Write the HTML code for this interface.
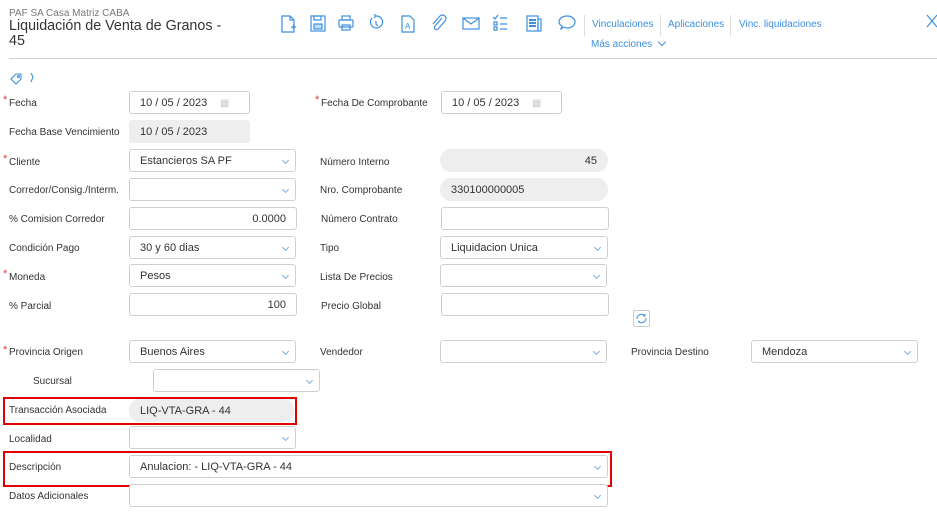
<!DOCTYPE html>
<html><head><meta charset="utf-8"><style>
*{box-sizing:border-box;margin:0;padding:0}
body{width:937px;height:519px;background:#fff;font-family:"Liberation Sans",sans-serif;position:relative;overflow:hidden;color:#333}
.a{position:absolute}
.l{position:absolute;font-size:10px;color:#333;line-height:12px;margin-top:1px}
.s{position:absolute;color:#e53935;font-size:11px;line-height:10px}
.b{position:absolute;height:23px;border:1px solid #cfcfcf;border-radius:3px;background:#fff;font-size:11px;line-height:21px;padding-left:10px;padding-top:1px;color:#333}
.g{background:#eeeeef;border-color:#eeeeef;border-radius:11px}
.r{text-align:right;padding-right:10px}
.dd::after{content:"";position:absolute;right:7px;top:8px;width:4px;height:4px;border-right:1px solid #7aaee0;border-bottom:1px solid #7aaee0;transform:rotate(45deg)}
.lnk{position:absolute;font-size:10px;color:#3d8fe0;top:19px}
.ic{position:absolute;top:14px}
</style></head><body>
<div class="a" style="left:9px;top:8px;font-size:10px;color:#777">PAF SA Casa Matriz CABA</div>
<div class="a" style="left:9px;top:19px;font-size:14.3px;color:#333;line-height:15px">Liquidación de Venta de Granos -<br>45</div>
<svg class="ic" style="left:280px" width="300" height="20" fill="none" stroke="#3d8fe0" stroke-width="1.2">
<path d="M2 2h8l4 4v12H2z M10 2v4h4 M11 13h5 M13.5 10.5v5"/>
<g transform="translate(30,0)"><rect x="1" y="2" width="14" height="15"/><rect x="4" y="2" width="7" height="4"/><rect x="4" y="10" width="8" height="5" fill="#3d8fe0" fill-opacity=".3"/></g>
<g transform="translate(58,0)"><rect x="4" y="2" width="8" height="4"/><rect x="1" y="6" width="14" height="7" rx="1"/><rect x="4" y="11" width="8" height="5"/></g>
<g transform="translate(88,0)"><path d="M4 4a6 6 0 1 0 4-2 M8 2l-2-2 M8 2l-2 2 M8 7v3l2 2"/></g>
<g transform="translate(120,0)"><path d="M2 2h8l4 4v12H2z"/><text x="5" y="15" font-size="8" fill="#3d8fe0" stroke="none" font-family="Liberation Sans">A</text></g>
<g transform="translate(150,0)"><path d="M12 4l-7 8a2 2 0 0 0 3 3l7-8a3.5 3.5 0 0 0-5-5l-7 8"/></g>
<g transform="translate(182,0)"><rect x="1" y="4" width="16" height="11"/><path d="M1 4l8 6 8-6"/></g>
<g transform="translate(212,0)"><path d="M1 3l2 2 3-4 M2 8h3v3H2z M2 13h3v3H2z M8 4h7 M8 10h7 M8 15h7"/></g>
<g transform="translate(246,0)"><rect x="1" y="2" width="11" height="15"/><rect x="12" y="5" width="3" height="12"/><path d="M3 6h7 M3 9h7 M3 12h7" stroke-width="2"/></g>
<g transform="translate(278,0)"><path d="M9 2c5 0 8 3 8 6s-3 6-8 6c-1 0-2 0-3-1l-3 2 1-3c-2-1-3-2-3-4 0-3 3-6 8-6z"/></g>
</svg>
<div class="a" style="left:584px;top:15px;width:1px;height:21px;background:#ddd"></div>
<div class="a" style="left:660px;top:15px;width:1px;height:21px;background:#ddd"></div>
<div class="a" style="left:730px;top:15px;width:1px;height:21px;background:#ddd"></div>
<div class="lnk" style="left:592px">Vinculaciones</div>
<div class="lnk" style="left:668px">Aplicaciones</div>
<div class="lnk" style="left:739px">Vinc. liquidaciones</div>
<div class="lnk" style="left:591px;top:39px">Más acciones <span style="display:inline-block;width:6px;height:6px;border-right:1px solid #3d8fe0;border-bottom:1px solid #3d8fe0;transform:rotate(45deg);margin-left:4px;position:relative;top:-2px"></span></div>
<svg class="a" style="left:926px;top:14px" width="11" height="14" stroke="#3d8fe0" stroke-width="1.2"><path d="M1 1l10 12 M11 1L1 13"/></svg>
<div class="a" style="left:9px;top:58px;width:928px;height:1px;background:#d0d0d0"></div>
<svg class="a" style="left:9px;top:71px" width="30" height="14" fill="none" stroke="#3d8fe0" stroke-width="1.1"><path d="M2 8l5-5h5v5l-5 5z"/><circle cx="9.5" cy="5.5" r="1"/><path d="M22 2l2 4-2 5"/></svg>

<span class="s" style="left:3px;top:95px">*</span><div class="l" style="left:9px;top:97px">Fecha</div>
<div class="b" style="left:129px;top:91px;width:121px">10 / 05 / 2023<span style="position:absolute;left:90px;color:#ccc;font-size:10px">▦</span></div>
<span class="s" style="left:315px;top:95px">*</span><div class="l" style="left:321px;top:97px">Fecha De Comprobante</div>
<div class="b" style="left:441px;top:91px;width:121px">10 / 05 / 2023<span style="position:absolute;left:90px;color:#ccc;font-size:10px">▦</span></div>

<div class="l" style="left:9px;top:126px">Fecha Base Vencimiento</div>
<div class="b g" style="left:129px;top:120px;width:121px;border-radius:3px">10 / 05 / 2023</div>

<span class="s" style="left:3px;top:154px">*</span><div class="l" style="left:9px;top:156px">Cliente</div>
<div class="b dd" style="left:129px;top:149px;width:167px">Estancieros SA PF</div>
<div class="l" style="left:320px;top:156px">Número Interno</div>
<div class="b g r" style="left:440px;top:149px;width:168px">45</div>

<div class="l" style="left:9px;top:184px">Corredor/Consig./Interm.</div>
<div class="b dd" style="left:129px;top:178px;width:167px"></div>
<div class="l" style="left:320px;top:184px">Nro. Comprobante</div>
<div class="b g" style="left:440px;top:178px;width:168px">330100000005</div>

<div class="l" style="left:9px;top:213px">% Comision Corredor</div>
<div class="b r" style="left:129px;top:207px;width:168px">0.0000</div>
<div class="l" style="left:321px;top:213px">Número Contrato</div>
<div class="b" style="left:441px;top:207px;width:168px"></div>

<div class="l" style="left:9px;top:242px">Condición Pago</div>
<div class="b dd" style="left:129px;top:236px;width:167px">30 y 60 dias</div>
<div class="l" style="left:320px;top:242px">Tipo</div>
<div class="b dd" style="left:440px;top:236px;width:168px">Liquidacion Unica</div>

<span class="s" style="left:3px;top:269px">*</span><div class="l" style="left:9px;top:271px">Moneda</div>
<div class="b dd" style="left:129px;top:264px;width:167px">Pesos</div>
<div class="l" style="left:320px;top:271px">Lista De Precios</div>
<div class="b dd" style="left:440px;top:264px;width:167px"></div>

<div class="l" style="left:9px;top:300px">% Parcial</div>
<div class="b r" style="left:129px;top:293px;width:168px">100</div>
<div class="l" style="left:321px;top:300px">Precio Global</div>
<div class="b" style="left:441px;top:293px;width:168px"></div>
<div class="a" style="left:633px;top:310px;width:17px;height:17px;border:1px solid #ccc;border-radius:2px"><svg width="15" height="15" fill="none" stroke="#3d8fe0" stroke-width="1"><path d="M3 8a4.5 4.5 0 0 1 8-3 M12 7a4.5 4.5 0 0 1-8 3 M11 3v2H9"/></svg></div>

<span class="s" style="left:3px;top:345px">*</span><div class="l" style="left:9px;top:346px">Provincia Origen</div>
<div class="b dd" style="left:129px;top:340px;width:167px">Buenos Aires</div>
<div class="l" style="left:320px;top:346px">Vendedor</div>
<div class="b dd" style="left:440px;top:340px;width:167px"></div>
<div class="l" style="left:631px;top:346px">Provincia Destino</div>
<div class="b dd" style="left:751px;top:340px;width:167px">Mendoza</div>

<div class="l" style="left:33px;top:375px">Sucursal</div>
<div class="b dd" style="left:153px;top:369px;width:167px"></div>

<div class="a" style="left:3px;top:397px;width:294px;height:28px;border:2px solid #e30000"></div>
<div class="l" style="left:9px;top:404px">Transacción Asociada</div>
<div class="b g" style="left:129px;top:399px;width:165px">LIQ-VTA-GRA - 44</div>

<div class="l" style="left:9px;top:433px">Localidad</div>
<div class="b dd" style="left:129px;top:426px;width:167px"></div>

<div class="a" style="left:3px;top:451px;width:609px;height:36px;border:2px solid #e30000"></div>
<div class="l" style="left:9px;top:461px">Descripción</div>
<div class="b dd" style="left:129px;top:455px;width:479px">Anulacion: - LIQ-VTA-GRA - 44</div>

<div class="l" style="left:9px;top:490px">Datos Adicionales</div>
<div class="b dd" style="left:129px;top:484px;width:479px"></div>
</body></html>
